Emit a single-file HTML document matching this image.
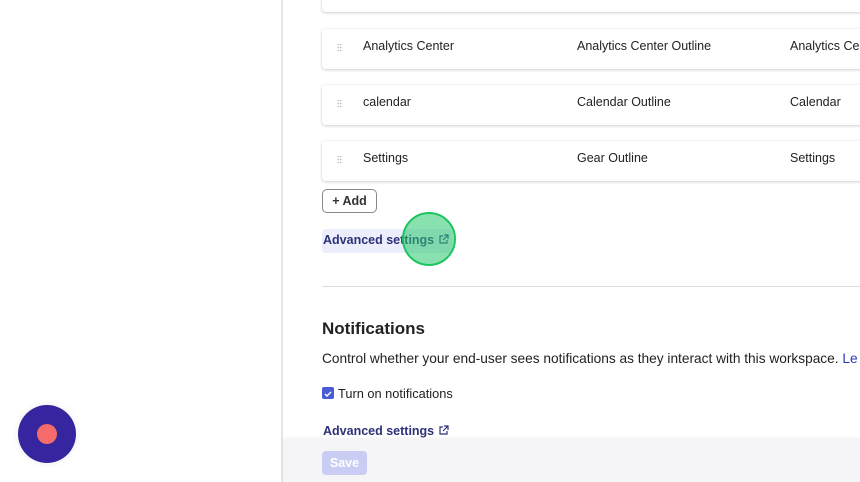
<!DOCTYPE html>
<html><head><style>
body{margin:0;width:860px;height:482px;overflow:hidden;background:#fff;font-family:"Liberation Sans",sans-serif;position:relative;color:#222}
.sep{position:absolute;left:281px;top:0;width:2px;height:482px;background:#e6e6e6}
.row{position:absolute;left:322px;width:560px;height:40px;background:#fff;border-radius:4px;box-shadow:0 1px 3px rgba(0,0,0,.18),0 0 1px rgba(0,0,0,.1);font-size:12.5px}
.row span{position:absolute;top:10px}
.dots{position:absolute;left:15px;top:14px;width:5px;height:9px;background-image:radial-gradient(circle,#bbb 0.7px,transparent 0.8px);background-size:2.5px 3px}
.t{position:absolute;font-size:12.5px}
.adv{position:absolute;font-size:12.5px;font-weight:bold;color:#2c3178}
</style></head><body>
<div class="sep"></div>
<div class="row" style="top:-28px"></div>
<div class="row" style="top:29px"><div class="dots"></div><span style="left:41px">Analytics Center</span><span style="left:255px">Analytics Center Outline</span><span style="left:468px">Analytics Center</span></div>
<div class="row" style="top:85px"><div class="dots"></div><span style="left:41px">calendar</span><span style="left:255px">Calendar Outline</span><span style="left:468px">Calendar</span></div>
<div class="row" style="top:141px"><div class="dots"></div><span style="left:41px">Settings</span><span style="left:255px">Gear Outline</span><span style="left:468px">Settings</span></div>
<div style="position:absolute;left:322px;top:189px;width:53px;height:22px;border:1px solid #888;border-radius:5px;font-size:12.5px;font-weight:bold;line-height:22px;text-align:center;color:#333">+ Add</div>
<div style="position:absolute;left:322px;top:229px;width:130px;height:24px;background:#eceefb;border-radius:4px"></div>
<div class="adv" style="left:323px;top:233px">Advanced settings <svg width="11" height="11" viewBox="0 0 11 11" style="vertical-align:-1px"><path d="M5 2H2v7h7V6M6 1h4v4M10 1L5 6" fill="none" stroke="#2c3178" stroke-width="1.2"/></svg></div>
<div style="position:absolute;left:402px;top:212px;width:54px;height:54px;border-radius:50%;background:rgba(40,200,110,.55);border:2px solid #1ec45f;box-sizing:border-box"></div>
<div style="position:absolute;left:322px;top:286px;width:540px;height:1px;background:#ddd"></div>
<div class="t" style="left:322px;top:319px;font-size:17px;font-weight:bold;color:#222">Notifications</div>
<div class="t" style="left:322px;top:351px;font-size:13.7px;white-space:nowrap">Control whether your end-user sees notifications as they interact with this workspace. <span style="color:#2c3bb8">Le</span></div>
<div style="position:absolute;left:322px;top:387px;width:12px;height:12px;background:#4a5bd6;border-radius:2px"><svg width="12" height="12"><path d="M3 6l2 2 4-4" stroke="#fff" stroke-width="1.4" fill="none"/></svg></div>
<div class="t" style="left:338px;top:386px;font-size:12.8px">Turn on notifications</div>
<div class="adv" style="left:323px;top:424px">Advanced settings <svg width="11" height="11" viewBox="0 0 11 11" style="vertical-align:-1px"><path d="M5 2H2v7h7V6M6 1h4v4M10 1L5 6" fill="none" stroke="#2c3178" stroke-width="1.2"/></svg></div>
<div style="position:absolute;left:283px;top:439px;width:577px;height:43px;background:#f5f5f7;box-shadow:0 -1px 3px rgba(0,0,0,.06)"></div>
<div style="position:absolute;left:322px;top:451px;width:45px;height:24px;background:#c9ccf3;border-radius:4px;color:#fff;font-weight:bold;font-size:12.5px;line-height:24px;text-align:center">Save</div>
<div style="position:absolute;left:18px;top:405px;width:58px;height:58px;border-radius:50%;background:#3526a0;box-shadow:0 0 8px rgba(0,0,0,.08)"></div>
<div style="position:absolute;left:37px;top:424px;width:20px;height:20px;border-radius:50%;background:#f56b6b"></div>
</body></html>
